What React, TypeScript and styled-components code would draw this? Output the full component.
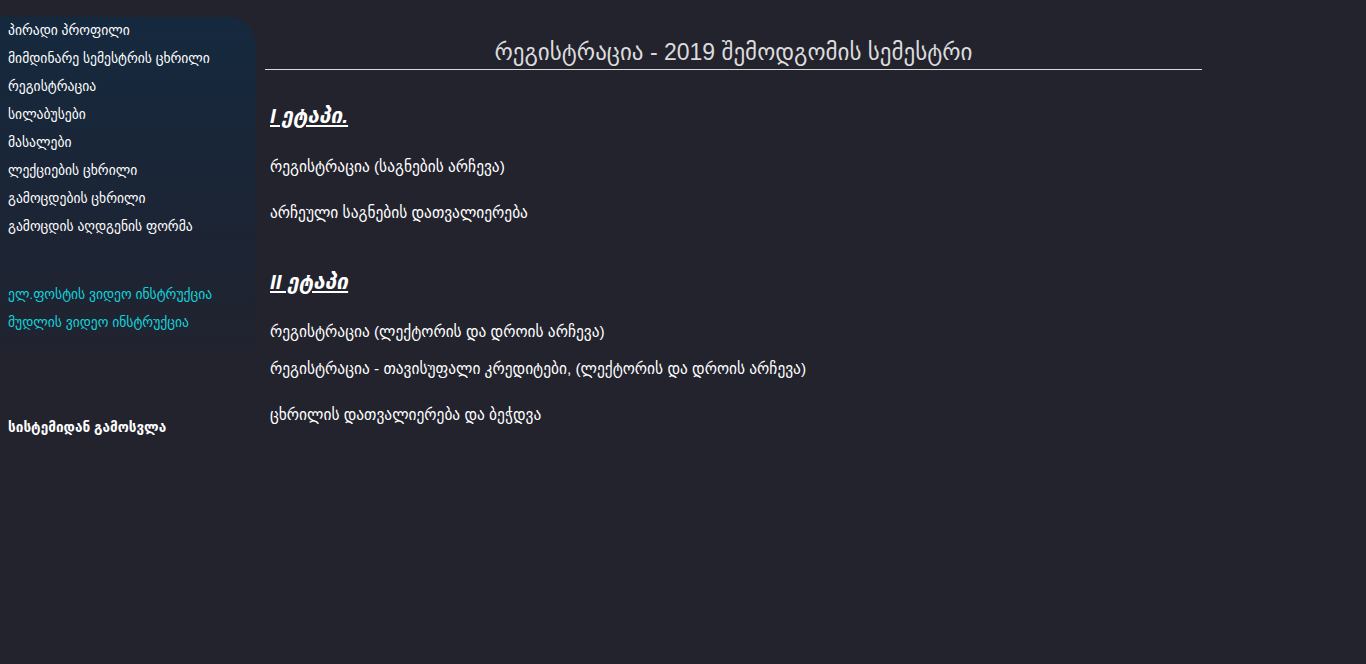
import React from 'react';
import styled, { createGlobalStyle } from 'styled-components';

const GlobalStyle = createGlobalStyle`
  html, body {
    margin: 0;
    padding: 0;
    background: #23232e;
  }
  body {
    font-family: "Liberation Sans", "DejaVu Sans", sans-serif;
    color: #ffffff;
  }
`;

const menuItems = [
  'პირადი პროფილი',
  'მიმდინარე სემესტრის ცხრილი',
  'რეგისტრაცია',
  'სილაბუსები',
  'მასალები',
  'ლექციების ცხრილი',
  'გამოცდების ცხრილი',
  'გამოცდის აღდგენის ფორმა',
];

const helpLinks = ['ელ.ფოსტის ვიდეო ინსტრუქცია', 'მუდლის ვიდეო ინსტრუქცია'];

function App() {
  return (
    <>
      <GlobalStyle />
      <Page>
        <Side>
          <Panel>
            {menuItems.map((item) => (
              <MenuLink key={item}>{item}</MenuLink>
            ))}
            <Spacer />
            {helpLinks.map((item) => (
              <MenuLink key={item} accent>
                {item}
              </MenuLink>
            ))}
          </Panel>
          <Logout>სისტემიდან გამოსვლა</Logout>
        </Side>
        <Main>
          <Title>რეგისტრაცია - 2019 შემოდგომის სემესტრი</Title>
          <Stage>I ეტაპი.</Stage>
          <Step gap={24}>რეგისტრაცია (საგნების არჩევა)</Step>
          <Step gap={20}>არჩეული საგნების დათვალიერება</Step>
          <Stage top={42}>II ეტაპი</Stage>
          <Step gap={23}>რეგისტრაცია (ლექტორის და დროის არჩევა)</Step>
          <Step gap={11}>რეგისტრაცია - თავისუფალი კრედიტები, (ლექტორის და დროის არჩევა)</Step>
          <Step gap={20}>ცხრილის დათვალიერება და ბეჭდვა</Step>
        </Main>
      </Page>
    </>
  );
}

const Page = styled.div`
  display: flex;
  align-items: flex-start;
  min-height: 664px;
`;

const Side = styled.div`
  width: 256px;
  flex-shrink: 0;
  padding-top: 17px;
`;

const Panel = styled.nav`
  display: flex;
  flex-direction: column;
  height: 335px;
  box-sizing: border-box;
  padding: 1px 8px 0;
  border-top-right-radius: 28px;
  background: linear-gradient(to bottom, #15293e 0%, #1b2536 55%, #21232f 100%);
`;

const MenuLink = styled.a<{ accent?: boolean }>`
  display: block;
  height: 28px;
  line-height: 26px;
  font-size: 13.6px;
  color: ${({ accent }) => (accent ? '#12d3dc' : '#ffffff')};
  text-decoration: none;
  white-space: nowrap;
`;

const Spacer = styled.div`
  height: 40px;
`;

const Logout = styled.div`
  margin-top: 67px;
  padding-left: 8px;
  font-size: 13.6px;
  font-weight: bold;
  color: #ffffff;
`;

const Main = styled.main`
  width: 937px;
  margin-left: 9px;
  padding-top: 38px;
`;

const Title = styled.h1`
  margin: 0 0 32px;
  padding-bottom: 3px;
  border-bottom: 1px solid #d8d8d8;
  font-size: 23px;
  font-weight: normal;
  line-height: 28px;
  text-align: center;
  color: #dcdcdc;
`;

const Stage = styled.h2<{ top?: number }>`
  margin: ${({ top }) => top ?? 0}px 0 0 5px;
  font-size: 20.8px;
  font-style: italic;
  font-weight: bold;
  line-height: 28px;
  text-decoration: underline;
  color: #ffffff;
`;

const Step = styled.p<{ gap?: number }>`
  margin: ${({ gap }) => gap ?? 22}px 0 0 5px;
  font-size: 15.4px;
  line-height: 26px;
  color: #ffffff;
`;

export default App;
